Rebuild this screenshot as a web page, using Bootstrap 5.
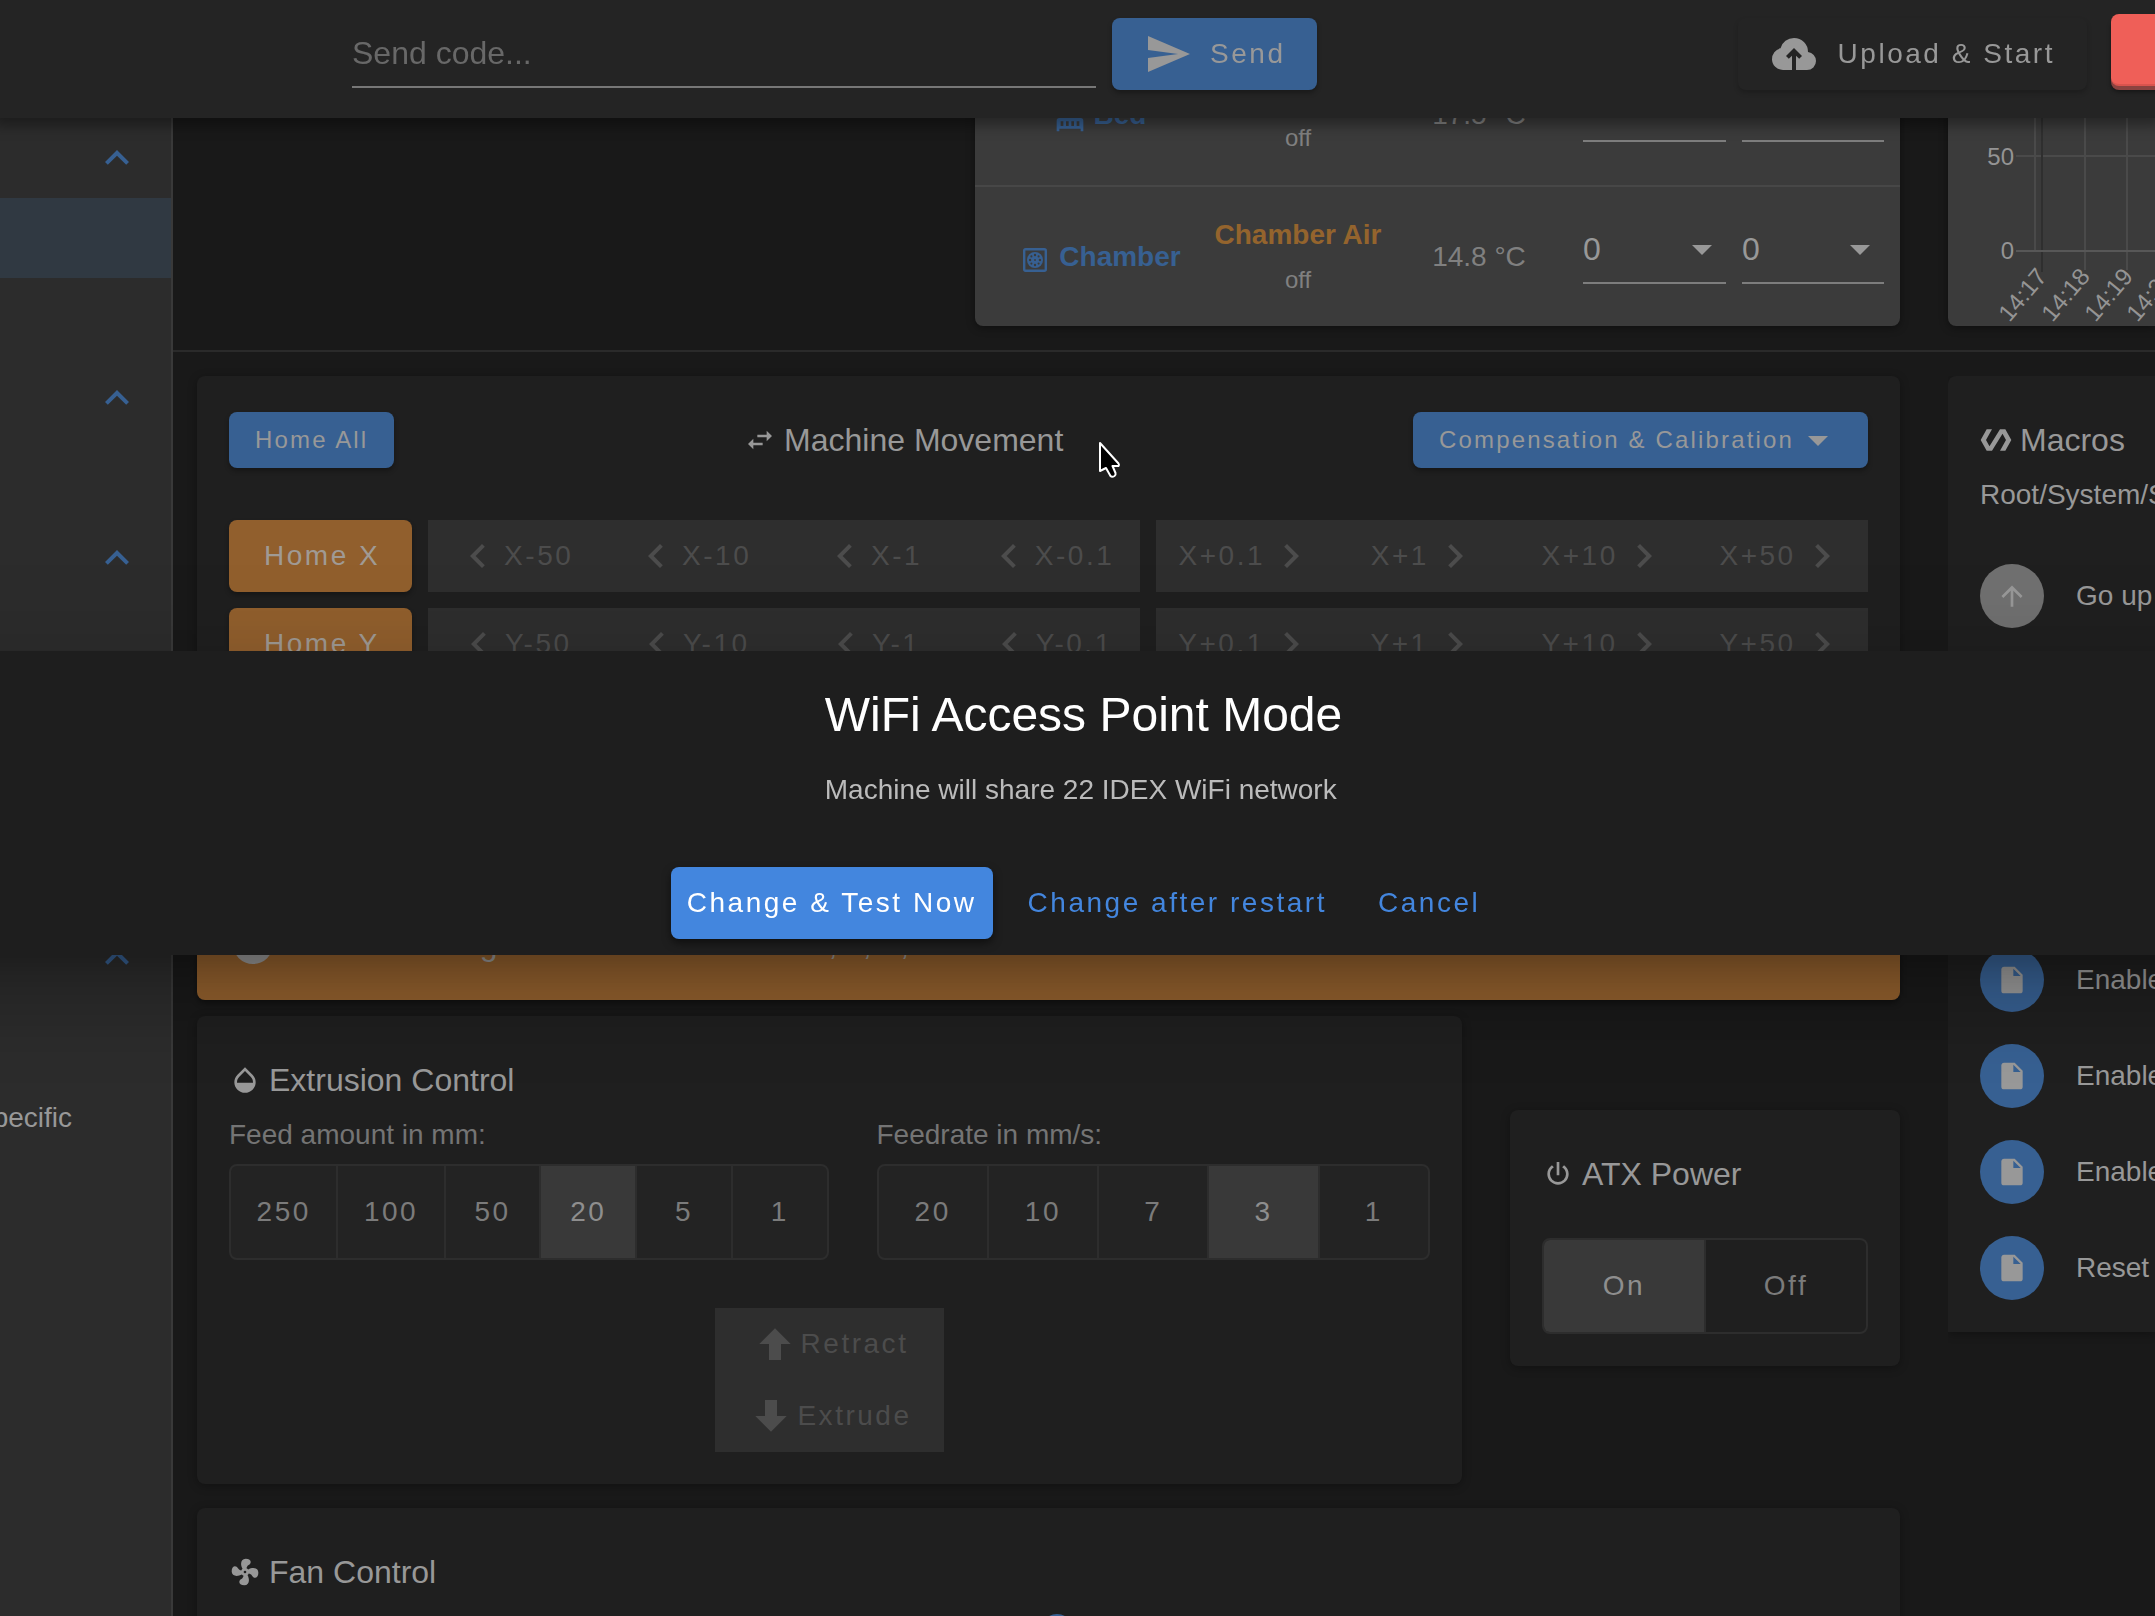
<!DOCTYPE html>
<html lang="en" data-bs-theme="dark">
<head>
<meta charset="utf-8">
<meta name="viewport" content="width=device-width, initial-scale=1">
<title>Machine Dashboard</title>
<link rel="stylesheet" href="https://cdn.jsdelivr.net/npm/bootstrap@5.3.0/dist/css/bootstrap.min.css">
<style>
:root { --tint: #376092; --warm: #915f2d; --ink: #989898; --dim: #7b7b7b; --panel: #1f1f1f; }
body { font-family: "Liberation Sans", Arial, sans-serif; font-size: 28px; line-height: 42px; background: #191919; color: var(--ink); overflow: hidden; }
svg { fill: currentColor; flex: none; }
.ico { width: 32px; height: 32px; }
.ico-lg { width: 48px; height: 48px; }
.btn { --bs-btn-font-size: 28px; --bs-btn-line-height: 42px; --bs-btn-padding-y: 0; --bs-btn-padding-x: 16px; --bs-btn-border-width: 0; --bs-btn-border-radius: 8px; --bs-btn-disabled-opacity: 1; letter-spacing: .09em; white-space: nowrap; min-height: 72px; display: inline-flex; align-items: center; justify-content: center; }
.btn-tint { --bs-btn-color: var(--ink); --bs-btn-bg: var(--tint); --bs-btn-hover-color: #aaa; --bs-btn-hover-bg: #3c689e; box-shadow: 0 3px 5px rgba(0,0,0,.3); }
.btn-warm { --bs-btn-color: #a09a94; --bs-btn-bg: var(--warm); --bs-btn-hover-color: #aaa; --bs-btn-hover-bg: #9b6630; box-shadow: 0 3px 5px rgba(0,0,0,.3); }
.btn-upload { --bs-btn-color: var(--ink); --bs-btn-padding-x: 32px; box-shadow: 0 3px 5px rgba(0,0,0,.2); gap: 20px; }
.btn-send { --bs-btn-padding-x: 32px; gap: 18px; }
.btn-short { --bs-btn-font-size: 24px; --bs-btn-padding-x: 26px; min-height: 56px; }
.btn-stop { --bs-btn-bg: #ef5f58; width: 128px; flex: none; margin-bottom: 8px; box-shadow: 0 4px 0 #8b4340, 0 6px 4px rgba(0,0,0,.4); border-bottom: 2px solid #d9544e; }
.stop-slot { width: 44px; }
.topbar { height: 118px; background: #242424; box-shadow: 0 2px 12px 6px rgba(0,0,0,.35); padding: 0 0 10px 352px; z-index: 1020; }
.code-box { flex: 0 1 744px; border: 0; border-bottom: 2px solid #777; background: transparent; color: var(--ink); font-size: 32px; height: 68px; padding: 0; border-radius: 0; }
.code-box::placeholder { color: #686868; }
.sidebar { width: 173px; background: #2c2c2c; border-right: 2px solid #393939; padding-top: 118px; }
.side-row { height: 80px; padding-right: 30px; display: flex; align-items: center; justify-content: flex-end; color: var(--ink); text-decoration: none; overflow: hidden; white-space: nowrap; }
.side-row svg { color: var(--tint); }
.side-row.current { background: #303942; }
.side-row.labelled { padding-right: 99px; }
.side-col { width: 207px; flex: none; }
.stage { min-width: 0; }
.upper, .lower { display: flex; gap: 48px; padding: 44px 0 24px 24px; }
.lower { padding-top: 24px; border-top: 2px solid #2a2a2a; }
.panel { background: var(--panel); border-radius: 8px; box-shadow: 0 2px 10px rgba(0,0,0,.3); padding: 32px; }
.panel-light { background: #3b3b3b; border-radius: 0 0 8px 8px; box-shadow: 0 2px 8px rgba(0,0,0,.4); }
.panel-edge { border-radius: 8px 0 0 0; padding-right: 0; padding-bottom: 16px; }
.panel-light.side-col { border-radius: 0 0 0 8px; }
.heading { color: var(--ink); font-size: 32px; line-height: 64px; font-weight: 400; margin: 0; display: flex; align-items: center; gap: 8px; white-space: nowrap; }
.heater { width: 925px; table-layout: fixed; margin: 0; }
.heater td { height: 142px; padding: 0; vertical-align: middle; text-align: center; white-space: nowrap; color: #808080; }
.heater td:first-child { padding-left: 20px; }
.heater td:last-child { padding-right: 16px; }
.heater tr:not(:last-child) td { border-bottom: 2px solid #474747; }
.heater tr:last-child td { height: 140px; }
.heater .tool { color: var(--tint); font-weight: 700; text-decoration: none; display: flex; justify-content: center; gap: 8px; align-items: center; }
.heater .tool svg { margin-top: 6px; }
.heater .sensor { color: #94642d; font-weight: 700; display: block; line-height: 34px; min-height: 34px; margin-bottom: 12px; }
.heater .state { font-size: 24px; display: block; line-height: 32px; }
.temp { height: 68px; border-bottom: 2px solid #7d7d7d; margin: 0 0 14px 16px; display: flex; align-items: center; }
.temp select { flex: 1; min-width: 0; appearance: none; border: 0; background: transparent; color: var(--ink); font-size: 32px; padding: 0; }
.temp svg { pointer-events: none; margin-left: -48px; color: var(--ink); }
.moves { display: flex; gap: 16px; margin-bottom: 16px; }
.moves .home { flex: none; padding: 0 32px 0 35px; }
.steps { flex: 1 1 0; display: flex; background: #2e2e2e; }
.steps .btn, .feeder .btn { --bs-btn-disabled-color: #4c4c4c; flex: 1 1 auto; padding: 0; gap: 2px; }
.steps .ten { padding: 0 7px; }
.steps .one { padding: 0 11px; }
.moves-rest { height: 176px; }
.alert-warm { --bs-alert-padding-x: 32px; --bs-alert-padding-y: 0; --bs-alert-bg: var(--warm); --bs-alert-color: var(--ink); --bs-alert-border-radius: 8px; height: 112px; border: 0; font-size: 32px; gap: 32px; margin: 0 0 16px; box-shadow: 0 3px 6px rgba(0,0,0,.4); }
.feeds { display: flex; gap: 48px; margin-bottom: 48px; }
.feeds > :first-child { flex: 599 1 0; }
.feeds > :last-child { flex: 553 1 0; }
.field-name { color: #747474; padding-top: 2px; margin-bottom: 8px; display: block; }
.picker { display: flex; height: 96px; border: 2px solid #2d2d2d; border-radius: 8px; overflow: hidden; background: #232323; }
.picker .btn { --bs-btn-color: var(--dim); --bs-btn-border-radius: 0; --bs-btn-active-bg: #393939; --bs-btn-active-color: #8e8e8e; --bs-btn-hover-color: #8e8e8e; flex: 96 1 0; padding: 0; }
.picker .btn.wide { flex-grow: 108; }
.picker .btn + .btn { border-left: 2px solid #2d2d2d; }
.picker.flat { background: var(--panel); }
.feeder { width: 229px; background: #2e2e2e; }
.crumb { height: 76px; padding-top: 2px; }
.macro { height: 96px; display: flex; align-items: center; gap: 32px; color: var(--ink); text-decoration: none; white-space: nowrap; }
.disc { width: 64px; height: 64px; border-radius: 50%; flex: none; display: flex; align-items: center; justify-content: center; background: var(--tint); }
.disc.up { background: #707070; }
.fan-name { width: 812px; }
.fan-knob { width: 32px; height: 32px; background: var(--tint); margin-top: 2px; }
.veil { z-index: 1050; pointer-events: none; padding-bottom: 10px; }
.prompt { width: calc(100% + 240px); margin: 0 -120px; flex: none; height: 304px; background: #1e1e1e; padding: 16px 0 16px 12px; pointer-events: auto; box-shadow: 0 22px 30px -14px rgba(0,0,0,.2), 0 48px 76px 6px rgba(0,0,0,.14), 0 18px 92px 16px rgba(0,0,0,.12); }
.prompt h1 { font-size: 48px; line-height: 64px; color: #fff; margin: 16px 0 22px; }
.prompt p { color: #bbb; line-height: 42px; margin: 0 0 56px; }
.choices { gap: 19px; }
.btn-main { --bs-btn-color: #fff; --bs-btn-bg: #4386de; --bs-btn-hover-color: #fff; --bs-btn-hover-bg: #5190e2; box-shadow: 0 4px 8px rgba(0,0,0,.5); }
.btn-plain { --bs-btn-color: #4386de; --bs-btn-hover-color: #6ba0e6; }
.pointer { left: 1098px; top: 440px; z-index: 1060; pointer-events: none; }
</style>
<script src="https://cdn.jsdelivr.net/npm/bootstrap@5.3.0/dist/js/bootstrap.bundle.min.js"></script>
</head>
<body>
<svg class="d-none">
  <symbol id="i-up" viewBox="0 0 24 24"><path d="M7.41,15.41L12,10.83L16.59,15.41L18,14L12,8L6,14L7.41,15.41Z"/></symbol>
  <symbol id="i-left" viewBox="0 0 24 24"><path d="M15.41,16.58L10.83,12L15.41,7.41L14,6L8,12L14,18L15.41,16.58Z"/></symbol>
  <symbol id="i-right" viewBox="0 0 24 24"><path d="M8.59,16.58L13.17,12L8.59,7.41L10,6L16,12L10,18L8.59,16.58Z"/></symbol>
  <symbol id="i-caret" viewBox="0 0 24 24"><path d="M7,10L12,15L17,10H7Z"/></symbol>
  <symbol id="i-file" viewBox="0 0 24 24"><path d="M13,9V3.5L18.5,9M6,2C4.89,2 4,2.89 4,4V20A2,2 0 0,0 6,22H18A2,2 0 0,0 20,20V8L14,2H6Z"/></symbol>
</svg>

<header class="topbar fixed-top d-flex align-items-center">
  <input class="code-box form-control shadow-none" type="text" placeholder="Send code..." aria-label="Send code">
  <button class="btn btn-tint btn-send ms-3" type="button">
    <svg class="ico-lg" viewBox="0 0 24 24"><path d="M2,21L23,12L2,3V10L17,12L2,14V21Z"/></svg>Send
  </button>
  <button class="btn btn-upload ms-auto me-4 flex-shrink-0" type="button">
    <svg class="ico-lg" viewBox="0 0 24 24"><path d="M11 20H6.5Q4.22 20 2.61 18.43 1 16.85 1 14.58 1 12.63 2.17 11.1 3.35 9.57 5.25 9.15 5.88 6.85 7.75 5.43 9.63 4 12 4 14.93 4 16.96 6.04 19 8.07 19 11 20.73 11.2 21.86 12.5 23 13.78 23 15.5 23 17.38 21.69 18.69 20.38 20 18.5 20H13V12.85L14.6 14.4L16 13L12 9L8 13L9.4 14.4L11 12.85Z"/></svg>Upload &amp; Start
  </button>
  <div class="stop-slot flex-shrink-0"><button class="btn btn-stop" type="button" aria-label="Emergency stop"></button></div>
</header>

<div class="d-flex vh-100 overflow-hidden">
  <nav class="sidebar flex-shrink-0" aria-label="Sections">
    <a class="side-row" href="#" aria-label="Collapse"><svg class="ico-lg"><use href="#i-up"/></svg></a>
    <a class="side-row current" href="#" aria-label="Dashboard"></a>
    <a class="side-row" href="#" aria-label="Console"></a>
    <a class="side-row" href="#" aria-label="Collapse"><svg class="ico-lg"><use href="#i-up"/></svg></a>
    <a class="side-row" href="#" aria-label="Height Map"></a>
    <a class="side-row" href="#" aria-label="Collapse"><svg class="ico-lg"><use href="#i-up"/></svg></a>
    <a class="side-row" href="#" aria-label="Jobs"></a>
    <a class="side-row" href="#" aria-label="Macros"></a>
    <a class="side-row" href="#" aria-label="Filaments"></a>
    <a class="side-row" href="#" aria-label="System"></a>
    <a class="side-row" href="#" aria-label="Collapse"><svg class="ico-lg"><use href="#i-up"/></svg></a>
    <a class="side-row" href="#" aria-label="General"></a>
    <a class="side-row labelled" href="#">Machine-Specific</a>
  </nav>

  <main class="stage flex-fill">
    <section class="upper">
      <div class="flex-fill d-flex justify-content-end">
        <div class="panel-light">
          <table class="heater">
            <colgroup><col style="width:230px"><col style="width:186px"><col style="width:176px"><col style="width:159px"><col style="width:174px"></colgroup>
            <tbody>
              <tr>
                <td><a class="tool" href="#"><svg class="ico" viewBox="0 0 24 24"><path fill-rule="evenodd" d="M8,3L6.5,5.2L8,7.4L6,10.5L4.2,9.6L5.6,7.4L4.2,5.2L6.2,2.1ZM14,3L12.5,5.1L14,7.3L12,10.4L10.2,9.5L11.6,7.3L10.2,5.1L12.2,2ZM20,3L18.5,5.1L20,7.3L18,10.4L16.2,9.5L17.6,7.3L16.2,5.1L18.2,2ZM2,22V14A2,2 0 0,1 4,12H20A2,2 0 0,1 22,14V22H20V20H4V22ZM5,14.5V18H7V14.5ZM9,14.5V18H11V14.5ZM13,14.5V18H15V14.5ZM17,14.5V18H19V14.5Z"/></svg>Bed</a></td>
                <td><span class="sensor"></span><span class="state">off</span></td>
                <td>17.5 °C</td>
                <td><div class="temp"><select aria-label="Bed active temperature"><option>0</option></select><svg class="ico-lg"><use href="#i-caret"/></svg></div></td>
                <td><div class="temp"><select aria-label="Bed standby temperature"><option>0</option></select><svg class="ico-lg"><use href="#i-caret"/></svg></div></td>
              </tr>
              <tr>
                <td><a class="tool" href="#"><svg class="ico" viewBox="0 0 24 24"><path fill-rule="evenodd" d="M5,3H19A2,2 0 0,1 21,5V19A2,2 0 0,1 19,21H5A2,2 0 0,1 3,19V5A2,2 0 0,1 5,3ZM4.8,4.8V19.2H19.2V4.8Z"/><circle cx="12" cy="12" r="6"/><g fill="#3b3b3b"><circle cx="12" cy="8.3" r=".9"/><circle cx="12" cy="15.7" r=".9"/><circle cx="8.3" cy="12" r=".9"/><circle cx="15.7" cy="12" r=".9"/><circle cx="9.3" cy="9.3" r=".8"/><circle cx="14.7" cy="9.3" r=".8"/><circle cx="9.3" cy="14.7" r=".8"/><circle cx="14.7" cy="14.7" r=".8"/><circle cx="12" cy="12" r=".7"/></g></svg>Chamber</a></td>
                <td><span class="sensor">Chamber Air</span><span class="state">off</span></td>
                <td>14.8 °C</td>
                <td><div class="temp"><select aria-label="Chamber active temperature"><option>0</option></select><svg class="ico-lg"><use href="#i-caret"/></svg></div></td>
                <td><div class="temp"><select aria-label="Chamber standby temperature"><option>0</option></select><svg class="ico-lg"><use href="#i-caret"/></svg></div></td>
              </tr>
            </tbody>
          </table>
        </div>
      </div>
      <div class="side-col panel-light overflow-hidden">
        <svg class="d-block" width="207" height="282" viewBox="1948 44 207 282" role="img" aria-label="Temperature chart" font-family="Liberation Sans" font-size="24">
          <g fill="#4a4a4a"><path d="M2016 155h139v2h-139zM2034 44h2v206h-2zM2084 44h2v226h-2zM2126 44h2v226h-2z"/></g>
          <path fill="#2f2f2f" d="M2041 44h2v228h-2z"/>
          <path fill="#575757" d="M2016 250h139v2h-139z"/>
          <g fill="#949494"><text x="2014" y="165" text-anchor="end">50</text><text x="2014" y="259" text-anchor="end">0</text>
          <text transform="translate(2048 277) rotate(-50)" text-anchor="end">14:17</text>
          <text transform="translate(2091 277) rotate(-50)" text-anchor="end">14:18</text>
          <text transform="translate(2134 277) rotate(-50)" text-anchor="end">14:19</text>
          <text transform="translate(2176 277) rotate(-50)" text-anchor="end">14:20</text></g>
        </svg>
      </div>
    </section>

    <section class="lower">
      <div class="stage flex-fill">
        <div class="panel pb-0 mb-3">
          <div class="d-flex justify-content-between align-items-center mb-5">
            <button class="btn btn-tint btn-short" type="button">Home All</button>
            <h2 class="heading"><svg class="ico" viewBox="0 0 24 24"><path d="M21,9L17,5V8H10V10H17V13M7,11L3,15L7,19V16H14V14H7V11Z"/></svg>Machine Movement</h2>
            <button class="btn btn-tint btn-short" type="button">Compensation &amp; Calibration<svg class="ico-lg"><use href="#i-caret"/></svg></button>
          </div>
          <div class="moves">
            <button class="btn btn-warm home" type="button">Home X</button>
            <div class="steps">
              <button class="btn" disabled><svg class="ico-lg"><use href="#i-left"/></svg>X-50</button>
              <button class="btn ten" disabled><svg class="ico-lg"><use href="#i-left"/></svg>X-10</button>
              <button class="btn one" disabled><svg class="ico-lg"><use href="#i-left"/></svg>X-1</button>
              <button class="btn" disabled><svg class="ico-lg"><use href="#i-left"/></svg>X-0.1</button>
            </div>
            <div class="steps">
              <button class="btn" disabled>X+0.1<svg class="ico-lg"><use href="#i-right"/></svg></button>
              <button class="btn one" disabled>X+1<svg class="ico-lg"><use href="#i-right"/></svg></button>
              <button class="btn ten" disabled>X+10<svg class="ico-lg"><use href="#i-right"/></svg></button>
              <button class="btn" disabled>X+50<svg class="ico-lg"><use href="#i-right"/></svg></button>
            </div>
          </div>
          <div class="moves">
            <button class="btn btn-warm home" type="button">Home Y</button>
            <div class="steps">
              <button class="btn" disabled><svg class="ico-lg"><use href="#i-left"/></svg>Y-50</button>
              <button class="btn ten" disabled><svg class="ico-lg"><use href="#i-left"/></svg>Y-10</button>
              <button class="btn one" disabled><svg class="ico-lg"><use href="#i-left"/></svg>Y-1</button>
              <button class="btn" disabled><svg class="ico-lg"><use href="#i-left"/></svg>Y-0.1</button>
            </div>
            <div class="steps">
              <button class="btn" disabled>Y+0.1<svg class="ico-lg"><use href="#i-right"/></svg></button>
              <button class="btn one" disabled>Y+1<svg class="ico-lg"><use href="#i-right"/></svg></button>
              <button class="btn ten" disabled>Y+10<svg class="ico-lg"><use href="#i-right"/></svg></button>
              <button class="btn" disabled>Y+50<svg class="ico-lg"><use href="#i-right"/></svg></button>
            </div>
          </div>
          <div class="moves-rest"></div>
        </div>

        <div class="alert alert-warm d-flex align-items-center" role="alert">
          <svg class="ico-lg" viewBox="0 0 24 24"><path d="M13,13H11V7H13M13,17H11V15H13M12,2A10,10 0 0,0 2,12A10,10 0 0,0 12,22A10,10 0 0,0 22,12A10,10 0 0,0 12,2Z"/></svg>
          <span>The following axes are not homed: X, Y, Z, U</span>
        </div>

        <div class="d-flex align-items-center gap-5 mb-4">
          <div class="panel flex-fill">
            <h2 class="heading"><svg class="ico" viewBox="0 0 24 24"><path d="M17.66,8L12,2.35L6.34,8C4.78,9.56 4,11.64 4,13.64C4,15.64 4.78,17.73 6.34,19.29C7.9,20.85 9.95,21.64 12,21.64C14.05,21.64 16.1,20.85 17.66,19.29C19.22,17.73 20,15.64 20,13.64C20,11.64 19.22,9.56 17.66,8M6,14C6,12 6.62,10.73 7.76,9.6L12,5.27L16.24,9.65C17.38,10.77 18,12 18,14H6Z"/></svg>Extrusion Control</h2>
            <div class="feeds">
              <div>
                <span class="field-name" id="amount">Feed amount in mm:</span>
                <div class="picker" role="group" aria-labelledby="amount">
                  <button class="btn wide" type="button">250</button><button class="btn wide" type="button">100</button><button class="btn" type="button">50</button><button class="btn active" type="button">20</button><button class="btn" type="button">5</button><button class="btn" type="button">1</button>
                </div>
              </div>
              <div>
                <span class="field-name" id="rate">Feedrate in mm/s:</span>
                <div class="picker" role="group" aria-labelledby="rate">
                  <button class="btn" type="button">20</button><button class="btn" type="button">10</button><button class="btn" type="button">7</button><button class="btn active" type="button">3</button><button class="btn" type="button">1</button>
                </div>
              </div>
            </div>
            <div class="feeder d-flex flex-column mx-auto">
              <button class="btn" disabled><svg class="ico-lg" viewBox="0 0 24 24"><path d="M15,20H9V12H4.16L12,4.16L19.84,12H15V20Z"/></svg>Retract</button>
              <button class="btn" disabled><svg class="ico-lg" viewBox="0 0 24 24"><path d="M9,4H15V12H19.84L12,19.84L4.16,12H9V4Z"/></svg>Extrude</button>
            </div>
          </div>
          <div class="panel flex-shrink-0 mb-4" style="width:390px">
            <h2 class="heading" style="margin-bottom:32px"><svg class="ico" viewBox="0 0 24 24"><path d="M16.56,5.44L15.11,6.89C16.84,7.94 18,9.83 18,12A6,6 0 0,1 12,18A6,6 0 0,1 6,12C6,9.83 7.16,7.94 8.88,6.88L7.44,5.44C5.36,6.88 4,9.28 4,12A8,8 0 0,0 12,20A8,8 0 0,0 20,12C20,9.28 18.64,6.88 16.56,5.44M13,3H11V13H13"/></svg>ATX Power</h2>
            <div class="picker flat" role="group" aria-label="ATX Power">
              <button class="btn active" type="button">On</button><button class="btn" type="button">Off</button>
            </div>
          </div>
        </div>

        <div class="panel">
          <h2 class="heading"><svg class="ico" viewBox="0 0 24 24"><path d="M12,11A1,1 0 0,0 11,12A1,1 0 0,0 12,13A1,1 0 0,0 13,12A1,1 0 0,0 12,11M12.5,2C17,2 17.11,5.57 14.75,6.75C13.76,7.24 13.32,8.29 13.13,9.22C13.61,9.42 14.03,9.73 14.35,10.13C18.05,8.13 22.03,8.92 22.03,12.5C22.03,17 18.46,17.1 17.28,14.73C16.78,13.74 15.72,13.3 14.79,13.11C14.59,13.59 14.28,14 13.88,14.34C15.87,18.03 15.08,22 11.5,22C7,22 6.91,18.42 9.27,17.24C10.25,16.75 10.69,15.71 10.89,14.79C10.4,14.59 9.97,14.27 9.65,13.87C5.96,15.85 2,15.07 2,11.5C2,7 5.56,6.89 6.74,9.26C7.24,10.25 8.29,10.68 9.22,10.87C9.41,10.39 9.73,9.97 10.14,9.65C8.15,5.96 8.94,2 12.5,2Z"/></svg>Fan Control</h2>
          <div class="d-flex pt-2">
            <span class="field-name pt-0 fan-name">Fan Selection</span>
            <span class="rounded-circle fan-knob"></span>
          </div>
        </div>
      </div>

      <aside class="side-col overflow-hidden">
        <div class="panel panel-edge">
          <h2 class="heading"><svg class="ico" viewBox="0 0 24 24"><path d="M19,4H15L7.1,16.63L4.5,12L9,4H5L0.5,12L5,20H9L16.89,7.37L19.5,12L15,20H19L23.5,12L19,4Z"/></svg>Macros</h2>
          <div class="crumb text-nowrap">Root/System/Settings</div>
          <a class="macro" href="#"><span class="disc up"><svg class="ico" viewBox="0 0 24 24"><path d="M13,20H11V8L5.5,13.5L4.08,12.08L12,4.16L19.92,12.08L18.5,13.5L13,8V20Z"/></svg></span>Go up</a>
          <a class="macro" href="#"><span class="disc"><svg class="ico"><use href="#i-file"/></svg></span>Disable</a>
          <a class="macro" href="#"><span class="disc"><svg class="ico"><use href="#i-file"/></svg></span>Disable</a>
          <a class="macro" href="#"><span class="disc"><svg class="ico"><use href="#i-file"/></svg></span>Disable</a>
          <a class="macro" href="#"><span class="disc"><svg class="ico"><use href="#i-file"/></svg></span>Enable</a>
          <a class="macro" href="#"><span class="disc"><svg class="ico"><use href="#i-file"/></svg></span>Enable</a>
          <a class="macro" href="#"><span class="disc"><svg class="ico"><use href="#i-file"/></svg></span>Enable</a>
          <a class="macro" href="#"><span class="disc"><svg class="ico"><use href="#i-file"/></svg></span>Reset</a>
        </div>
      </aside>
    </section>
  </main>
</div>

<div class="veil position-fixed top-0 start-0 w-100 h-100 d-flex align-items-center overflow-hidden">
  <div class="prompt d-flex flex-column align-items-center" role="dialog" aria-labelledby="ap-title">
    <div>
      <h1 id="ap-title">WiFi Access Point Mode</h1>
      <p>Machine will share 22 IDEX WiFi network</p>
    </div>
    <div class="choices d-flex">
      <button class="btn btn-main" type="button">Change &amp; Test Now</button>
      <button class="btn btn-plain" type="button">Change after restart</button>
      <button class="btn btn-plain" type="button">Cancel</button>
    </div>
  </div>
</div>

<svg class="pointer position-absolute" width="26" height="42" viewBox="0 0 26 42" aria-hidden="true"><path d="M2 3V31L8 28L12.500 36Q14 37.500 16.500 36Q18 35 17.500 33L14.500 26H20.500Q21.500 25 20.500 23.500Z" fill="#000" stroke="#fff" stroke-width="2" stroke-linejoin="round"/></svg>
</body>
</html>
